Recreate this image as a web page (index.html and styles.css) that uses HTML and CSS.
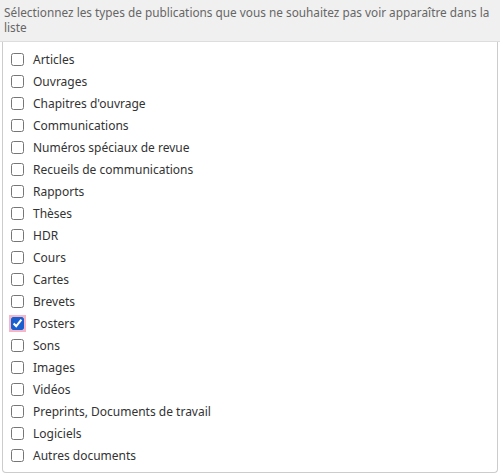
FILE: index.html
```html
<!DOCTYPE html>
<html lang="fr">
<head>
    <meta charset="UTF-8">
    <title>Types de publications</title>
    <link rel="stylesheet" href="styles.css">
</head>
<body>
    <div class="panel">
        <div class="panel-heading">Sélectionnez les types de publications que vous ne souhaitez pas voir apparaître dans la liste</div>
        <div class="panel-body">
            <label class="item"><input type="checkbox"> Articles</label>
            <label class="item"><input type="checkbox"> Ouvrages</label>
            <label class="item"><input type="checkbox"> Chapitres d'ouvrage</label>
            <label class="item"><input type="checkbox"> Communications</label>
            <label class="item"><input type="checkbox"> Numéros spéciaux de revue</label>
            <label class="item"><input type="checkbox"> Recueils de communications</label>
            <label class="item"><input type="checkbox"> Rapports</label>
            <label class="item"><input type="checkbox"> Thèses</label>
            <label class="item"><input type="checkbox"> HDR</label>
            <label class="item"><input type="checkbox"> Cours</label>
            <label class="item"><input type="checkbox"> Cartes</label>
            <label class="item"><input type="checkbox"> Brevets</label>
            <label class="item"><input type="checkbox" class="focused" checked> Posters</label>
            <label class="item"><input type="checkbox"> Sons</label>
            <label class="item"><input type="checkbox"> Images</label>
            <label class="item"><input type="checkbox"> Vidéos</label>
            <label class="item"><input type="checkbox"> Preprints, Documents de travail</label>
            <label class="item"><input type="checkbox"> Logiciels</label>
            <label class="item"><input type="checkbox"> Autres documents</label>
        </div>
    </div>
</body>
</html>
```

FILE: styles.css
```css
body {
    margin: 0;
    font-family: "Noto Sans", Arial, sans-serif;
    font-size: 12px;
    color: #333;
    background: #fff;
}
.panel {
    width: 500px;
}
.panel-heading {
    background-color: #f0f0f0;
    color: #666;
    padding: 5px 4px 5px 4px;
    font-size: 11.8px;
    line-height: 15px;
    height: 31px;
    border-bottom: 1px solid #ddd;
}
.panel-body {
    margin: 0 2px 0 2px;
    border: 1px solid #ccc;
    border-top: none;
    border-radius: 0 0 4px 4px;
    padding: 6px 0 6px 0;
}
.item {
    display: flex;
    align-items: center;
    height: 22px;
    padding-left: 8px;
    font-size: 12px;
}
.item input {
    width: 13px;
    height: 13px;
    margin: 0 9px 0 0;
    accent-color: #1a5fd0;
}
.item input.focused {
    box-shadow: 0 0 0 2px #f7b6c8;
    border-radius: 2px;
}
```
